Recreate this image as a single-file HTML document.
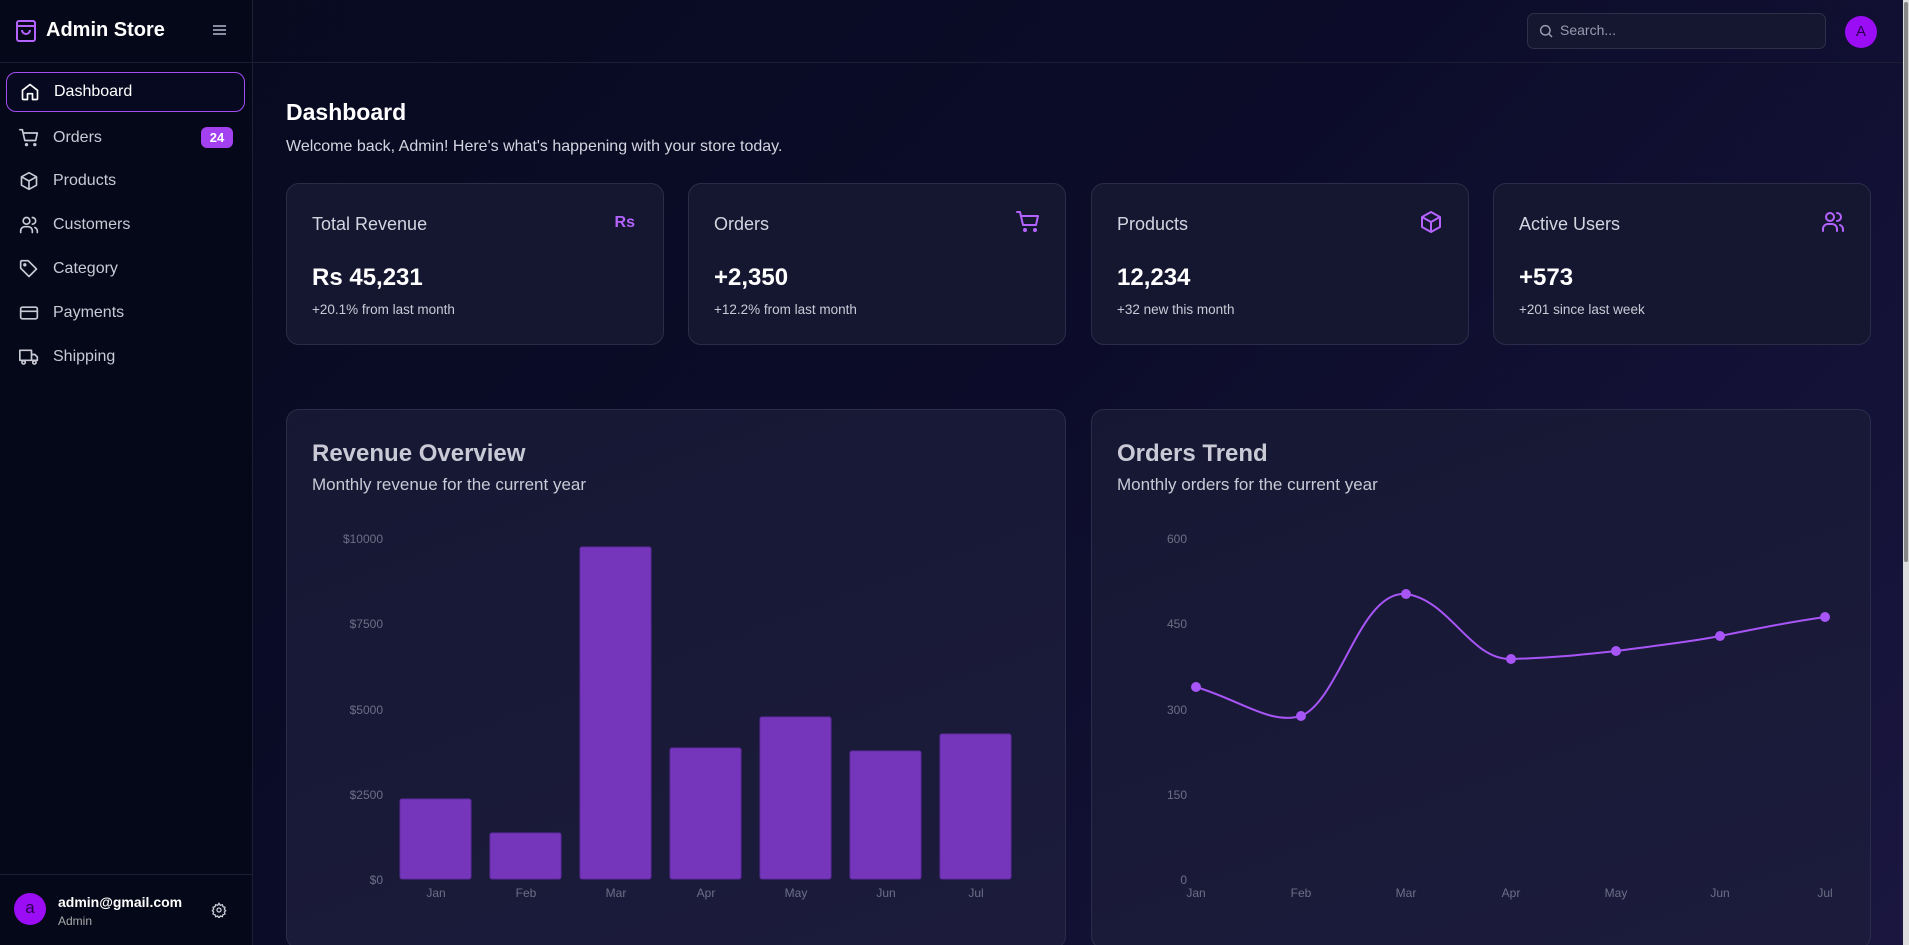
<!DOCTYPE html>
<html style="width:1909px;height:945px;overflow:hidden"><head><meta charset="utf-8"><style>
*{box-sizing:border-box;margin:0;padding:0}
body{width:1909px;height:945px;overflow:hidden;font-family:"Liberation Sans",sans-serif;background:linear-gradient(135deg,#070a1e 0%,#0c0c2a 50%,#1a1640 100%);color:#fff;position:relative}
.side{position:absolute;left:0;top:0;width:253px;height:945px;background:#050818;border-right:1px solid #1c1e33}
.abs{position:absolute}
.nav{position:absolute;left:6px;width:239px;height:40px;display:flex;align-items:center;padding-left:13px;font-size:16px;color:#c9cad6}
.nav svg{width:20px;height:20px;margin-right:14px;stroke:#c9cad6;fill:none;stroke-width:2;stroke-linecap:round;stroke-linejoin:round}
.card{position:absolute;top:183px;width:378px;height:162px;background:#151731;border:1px solid #2b2d48;border-radius:13px}
.card .t{position:absolute;left:25px;top:30px;font-size:18px;color:#d4d4e0}
.card .v{position:absolute;left:25px;top:80px;font-size:24px;font-weight:bold}
.card .s{position:absolute;left:25px;top:118px;font-size:13.5px;color:#c9cad6}
.card svg{position:absolute;right:25px;top:26px;width:24px;height:24px;stroke:#b463ff;fill:none;stroke-width:2;stroke-linecap:round;stroke-linejoin:round}
.cc{position:absolute;top:409px;width:780px;height:540px;background:linear-gradient(160deg,#161833,#1c1b3c);border:1px solid #2b2d48;border-radius:13px}
.cc .h{position:absolute;left:25px;top:30px;font-size:24px;font-weight:bold;color:#c9cad6}
.cc .p{position:absolute;left:25px;top:65px;font-size:17px;color:#c9cad6}
.ax{font-size:12px;fill:#6d6f86;font-family:"Liberation Sans",sans-serif}
</style></head><body>
<div class="side">
 <svg class="abs" style="left:15px;top:19px" width="22" height="24" viewBox="0 0 22 24" fill="none" stroke="#b463ff" stroke-width="2"><rect x="2" y="2" width="18" height="20" rx="2"/><path d="M2 7h18M7 11a4 4 0 0 0 8 0"/></svg>
 <div class="abs" style="left:46px;top:19px;font-size:20px;font-weight:bold">Admin Store</div>
 <div class="abs" style="left:213px;top:25px;width:13px;height:2px;background:#8a8ba0;box-shadow:0 4px 0 #8a8ba0,0 8px 0 #8a8ba0"></div>
 <div class="abs" style="left:0;top:62px;width:253px;height:1px;background:#1c1e33"></div>
 <div class="nav" style="top:72px;border:1.5px solid #a34cf0;border-radius:10px;color:#fff;background:#070920"><svg viewBox="0 0 24 24" style="stroke:#fff"><path d="M3 10l9-7 9 7v10a1 1 0 0 1-1 1h-5v-7H9v7H4a1 1 0 0 1-1-1z"/></svg>Dashboard</div>
 <div class="nav" style="top:118px"><svg viewBox="0 0 24 24"><circle cx="9" cy="20" r="1"/><circle cx="19" cy="20" r="1"/><path d="M1 2h3l3 13h13l2-9H6"/></svg>Orders</div>
 <div class="abs" style="left:201px;top:127px;width:32px;height:21px;border-radius:6px;background:#a340f0;font-size:13px;font-weight:bold;text-align:center;line-height:21px">24</div>
 <div class="nav" style="top:161px"><svg viewBox="0 0 24 24"><path d="M12 2l9 5v10l-9 5-9-5V7z M3 7l9 5 9-5 M12 12v10"/></svg>Products</div>
 <div class="nav" style="top:205px"><svg viewBox="0 0 24 24"><circle cx="9" cy="7" r="4"/><path d="M2 21v-2a5 5 0 0 1 5-5h4a5 5 0 0 1 5 5v2M16 3a4 4 0 0 1 0 8M22 21v-2a5 5 0 0 0-3-4"/></svg>Customers</div>
 <div class="nav" style="top:249px"><svg viewBox="0 0 24 24"><path d="M2 3v8l10 10 9-9L11 2H3z"/><circle cx="7" cy="7" r="1"/></svg>Category</div>
 <div class="nav" style="top:293px"><svg viewBox="0 0 24 24"><rect x="2" y="5" width="20" height="14" rx="2"/><path d="M2 10h20"/></svg>Payments</div>
 <div class="nav" style="top:337px"><svg viewBox="0 0 24 24"><path d="M1 4h14v12H1zM15 9h4l3 3v4h-7"/><circle cx="5.5" cy="18.5" r="2"/><circle cx="18.5" cy="18.5" r="2"/></svg>Shipping</div>
 <div class="abs" style="left:0;top:874px;width:253px;height:1px;background:#1c1e33"></div>
 <div class="abs" style="left:14px;top:893px;width:32px;height:32px;border-radius:50%;background:#9a0df5;color:#2a0050;font-size:17px;text-align:center;line-height:30px">a</div>
 <div class="abs" style="left:58px;top:894px;font-size:14px;font-weight:bold">admin@gmail.com</div>
 <div class="abs" style="left:58px;top:914px;font-size:12px;color:#aaa">Admin</div>
 <svg class="abs" style="left:211px;top:902px" width="16" height="16" viewBox="0 0 24 24" fill="none" stroke="#c9cad6" stroke-width="2"><circle cx="12" cy="12" r="3"/><path d="M12 2l2 3 3-1 1 3 3 1-1 3 2 2-2 2 1 3-3 1-1 3-3-1-2 3-2-3-3 1-1-3-3-1 1-3-2-2 2-2-1-3 3-1 1-3 3 1z"/></svg>
</div>
<div class="abs" style="left:253px;top:62px;width:1650px;height:1px;background:#1c1e33"></div>
<div class="abs" style="left:1527px;top:13px;width:299px;height:36px;border:1px solid #2e3048;border-radius:7px;background:#151731"></div>
<svg class="abs" style="left:1538px;top:23px" width="16" height="16" viewBox="0 0 24 24" fill="none" stroke="#9a9bb0" stroke-width="2.2"><circle cx="11" cy="11" r="7"/><path d="M21 21l-5-5"/></svg>
<div class="abs" style="left:1560px;top:22px;font-size:14px;color:#9a9bb0">Search...</div>
<div class="abs" style="left:1845px;top:16px;width:32px;height:32px;border-radius:50%;background:#9a0df5;color:#2a0050;font-size:15px;text-align:center;line-height:32px">A</div>
<div class="abs" style="left:1903px;top:0;width:6px;height:945px;background:#ddd"></div>
<div class="abs" style="left:1904px;top:2px;width:4px;height:560px;background:#888;border-radius:2px"></div>

<div class="abs" style="left:286px;top:99px;font-size:23px;font-weight:bold">Dashboard</div>
<div class="abs" style="left:286px;top:138px;font-size:16px;color:#d4d4e0">Welcome back, Admin! Here's what's happening with your store today.</div>

<div class="card" style="left:286px"><div class="t">Total Revenue</div><div class="abs" style="right:28px;top:30px;color:#b463ff;font-size:16px;font-weight:bold">Rs</div><div class="v">Rs 45,231</div><div class="s">+20.1% from last month</div></div>
<div class="card" style="left:688px"><div class="t">Orders</div><svg viewBox="0 0 24 24"><circle cx="9" cy="20" r="1"/><circle cx="19" cy="20" r="1"/><path d="M1 2h3l3 13h13l2-9H6"/></svg><div class="v">+2,350</div><div class="s">+12.2% from last month</div></div>
<div class="card" style="left:1091px"><div class="t">Products</div><svg viewBox="0 0 24 24"><path d="M12 2l9 5v10l-9 5-9-5V7z M3 7l9 5 9-5 M12 12v10"/></svg><div class="v">12,234</div><div class="s">+32 new this month</div></div>
<div class="card" style="left:1493px"><div class="t">Active Users</div><svg viewBox="0 0 24 24"><circle cx="9" cy="7" r="4"/><path d="M2 21v-2a5 5 0 0 1 5-5h4a5 5 0 0 1 5 5v2M16 3a4 4 0 0 1 0 8M22 21v-2a5 5 0 0 0-3-4"/></svg><div class="v">+573</div><div class="s">+201 since last week</div></div>

<div class="cc" style="left:286px"><div class="h">Revenue Overview</div><div class="p">Monthly revenue for the current year</div></div>
<div class="cc" style="left:1091px"><div class="h">Orders Trend</div><div class="p">Monthly orders for the current year</div></div>

<svg class="abs" style="left:0;top:0" width="1909" height="945">
 <g class="ax" text-anchor="end">
  <text x="383" y="543">$10000</text><text x="383" y="628">$7500</text><text x="383" y="714">$5000</text><text x="383" y="799">$2500</text><text x="383" y="884">$0</text>
 </g>
 <g fill="#7536bc" stroke="#5e2aa0" stroke-width="1">
  <rect x="400" y="799" width="71" height="80" rx="2"/>
  <rect x="490" y="833" width="71" height="46" rx="2"/>
  <rect x="580" y="547" width="71" height="332" rx="2"/>
  <rect x="670" y="748" width="71" height="131" rx="2"/>
  <rect x="760" y="717" width="71" height="162" rx="2"/>
  <rect x="850" y="751" width="71" height="128" rx="2"/>
  <rect x="940" y="734" width="71" height="145" rx="2"/>
 </g>
 <g class="ax" text-anchor="middle">
  <text x="436" y="897">Jan</text><text x="526" y="897">Feb</text><text x="616" y="897">Mar</text><text x="706" y="897">Apr</text><text x="796" y="897">May</text><text x="886" y="897">Jun</text><text x="976" y="897">Jul</text>
 </g>
 <g class="ax" text-anchor="end">
  <text x="1187" y="543">600</text><text x="1187" y="628">450</text><text x="1187" y="714">300</text><text x="1187" y="799">150</text><text x="1187" y="884">0</text>
 </g>
 <g class="ax" text-anchor="middle">
  <text x="1196" y="897">Jan</text><text x="1301" y="897">Feb</text><text x="1406" y="897">Mar</text><text x="1511" y="897">Apr</text><text x="1616" y="897">May</text><text x="1720" y="897">Jun</text><text x="1825" y="897">Jul</text>
 </g>
 <path d="M1196 687 C1240 700 1270 725 1301 716 C1340 700 1360 590 1406 594 C1450 600 1470 660 1511 659 C1550 658 1580 655 1616 651 C1660 645 1690 642 1720 636 C1760 628 1790 622 1825 617" fill="none" stroke="#a855f7" stroke-width="2"/>
 <g fill="#a855f7">
  <circle cx="1196" cy="687" r="5"/><circle cx="1301" cy="716" r="5"/><circle cx="1406" cy="594" r="5"/><circle cx="1511" cy="659" r="5"/><circle cx="1616" cy="651" r="5"/><circle cx="1720" cy="636" r="5"/><circle cx="1825" cy="617" r="5"/>
 </g>
</svg>
</body></html>
